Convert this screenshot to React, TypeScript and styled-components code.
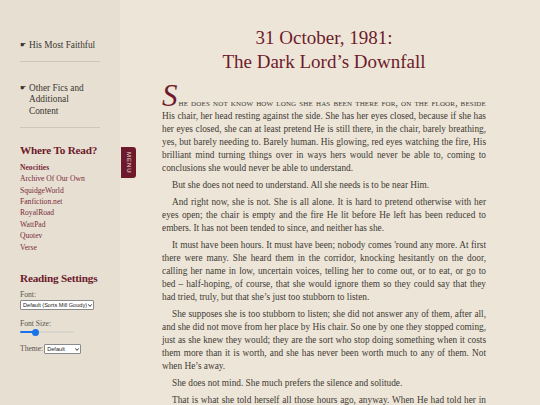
import React from "react";
import styled, {createGlobalStyle} from "styled-components";

const GlobalStyle = createGlobalStyle`
  html, body {
    margin: 0;
    padding: 0;
    background: #ede6d8;
  }
  body {
    font-family: "Liberation Serif", "Times New Roman", serif;
    color: #3f3a35;
  }
`

const Page = styled.div`
  display: flex;
  min-height: 100vh;
  position: relative;
`

const Sidebar = styled.aside`
  width: 120px;
  flex-shrink: 0;
  background: #e7e0d2;
  padding: 39px 10px 0 20px;
  box-sizing: border-box;
`

const Nav = styled.nav`
  display: flex;
  flex-direction: column;
  gap: 20px;
  margin-bottom: 15px;
`

const NavItem = styled.div`
  display: flex;
  gap: 3px;
  font-size: 9.3px;
  line-height: 11.2px;
  color: #3b3632;
  padding: 1px 0 10px;
  width: 80px;
  border-bottom: 1px solid #cfc6b6;
`

const Pointer = styled.span`
  font-size: 7px;
  flex-shrink: 0;
`

const SideTitle = styled.h3`
  margin: 0 0 5px;
  font-size: 11.2px;
  line-height: 14px;
  font-weight: bold;
  color: #6d1a2c;
  letter-spacing: -0.2px;
  white-space: nowrap;
`

const LinkList = styled.ul`
  list-style: none;
  margin: 0 0 18px;
  padding: 0;
`

const LinkItem = styled.li<{$current?: boolean}>`
  font-size: 7.6px;
  line-height: 11.4px;
  color: #7a2a3c;
  font-weight: ${({$current}) => $current ? "bold" : "normal"};
`

const SettingLabel = styled.div`
  font-size: 7.6px;
  line-height: 9px;
  color: #5a544e;
  margin-bottom: 1px;
`

const Setting = styled.div`
  margin-bottom: 9px;
  display: flex;
  flex-direction: column;
  align-items: flex-start;
`

const InlineSetting = styled.div`
  display: flex;
  align-items: center;
  gap: 1px;
`

const SelectWrap = styled.div<{$width: number}>`
  position: relative;
  width: ${({$width}) => $width}px;
  height: 10px;
`

const SmallSelect = styled.select`
  appearance: none;
  width: 100%;
  height: 100%;
  box-sizing: border-box;
  font-size: 5.6px;
  padding: 0 6px 0 2px;
  font-family: "Liberation Sans", Arial, sans-serif;
  border: 1px solid #8a8a8a;
  border-radius: 1px;
  background: #ffffff;
  color: #222;
  display: block;
`

const Chevron = styled.svg`
  position: absolute;
  right: 2px;
  top: 3.5px;
  width: 4px;
  height: 3px;
  pointer-events: none;
`

const Slider = styled.input`
  appearance: none;
  width: 54px;
  height: 6px;
  margin: 0;
  background: transparent;

  &::-webkit-slider-runnable-track {
    height: 2px;
    border-radius: 1px;
    background: linear-gradient(to right, #1a73e8 0 30%, #d9d4cc 30% 100%);
  }

  &::-webkit-slider-thumb {
    appearance: none;
    width: 7px;
    height: 7px;
    border-radius: 50%;
    background: #1a73e8;
    margin-top: -2.5px;
  }
`

const MenuTab = styled.div`
  position: absolute;
  left: 121px;
  top: 147px;
  width: 15px;
  height: 31px;
  background: #6d1a2c;
  border-radius: 0 3px 3px 0;
  display: flex;
  align-items: center;
  justify-content: center;
  color: #f1e6e0;
  font-family: "Liberation Sans", Arial, sans-serif;
  font-size: 6px;
  letter-spacing: 1px;
  writing-mode: vertical-rl;
`

const Main = styled.main`
  flex: 1;
  padding: 26px 54px 0 42px;
`

const Title = styled.h1`
  margin: 0 0 10px;
  text-align: center;
  font-size: 19px;
  line-height: 24px;
  font-weight: normal;
  color: #6d1a2c;
`

const Text = styled.p<{$first?: boolean}>`
  margin: 0 0 4px;
  font-size: 9.3px;
  line-height: 13px;
  text-align: justify;
  text-indent: ${({$first}) => $first ? "0" : "10px"};
`

const Initial = styled.span`
  font-size: 31px;
  line-height: 24px;
  color: #6d1a2c;
  font-style: italic;
  margin-right: 1px;
`

const SmallCaps = styled.span`
  font-variant: small-caps;
  letter-spacing: 0.15px;
`

const paragraphs = [
    "But she does not need to understand. All she needs is to be near Him.",
    "And right now, she is not. She is all alone. It is hard to pretend otherwise with her eyes open; the chair is empty and the fire He lit before He left has been reduced to embers. It has not been tended to since, and neither has she.",
    "It must have been hours. It must have been; nobody comes 'round any more. At first there were many. She heard them in the corridor, knocking hesitantly on the door, calling her name in low, uncertain voices, telling her to come out, or to eat, or go to bed \u2013 half-hoping, of course, that she would ignore them so they could say that they had tried, truly, but that she\u2019s just too stubborn to listen.",
    "She supposes she is too stubborn to listen; she did not answer any of them, after all, and she did not move from her place by His chair. So one by one they stopped coming, just as she knew they would; they are the sort who stop doing something when it costs them more than it is worth, and she has never been worth much to any of them. Not when He\u2019s away.",
    "She does not mind. She much prefers the silence and solitude.",
    "That is what she told herself all those hours ago, anyway. When He had told her in no uncertain terms that she was to stay behind, she had nodded and obeyed."
]

const readLinks = ["Archive Of Our Own", "SquidgeWorld", "Fanfiction.net", "RoyalRoad", "WattPad", "Quotev", "Verse"]

const Select = ({width, label}: {width: number, label: string}) =>
    <SelectWrap $width={width}>
        <SmallSelect defaultValue="default">
            <option value="default">{label}</option>
        </SmallSelect>
        <Chevron viewBox="0 0 4 3">
            <path d="M0.4 0.4 L2 2.4 L3.6 0.4" fill="none" stroke="#222" strokeWidth="0.9"/>
        </Chevron>
    </SelectWrap>

export default function App() {
    return <>
        <GlobalStyle/>
        <Page>
            <Sidebar>
                <Nav>
                    <NavItem><Pointer>☛</Pointer><span>His Most Faithful</span></NavItem>
                    <NavItem><Pointer>☛</Pointer><span>Other Fics and Additional Content</span></NavItem>
                </Nav>
                <SideTitle>Where To Read?</SideTitle>
                <LinkList>
                    <LinkItem $current>Neocities</LinkItem>
                    {readLinks.map((name) => <LinkItem key={name}>{name}</LinkItem>)}
                </LinkList>
                <SideTitle>Reading Settings</SideTitle>
                <Setting>
                    <SettingLabel>Font:</SettingLabel>
                    <Select width={74} label="Default (Sorts Mill Goudy)"/>
                </Setting>
                <Setting>
                    <SettingLabel>Font Size:</SettingLabel>
                    <Slider type="range" min={0} max={100} defaultValue={25}/>
                </Setting>
                <InlineSetting>
                    <SettingLabel>Theme:</SettingLabel>
                    <Select width={37} label="Default"/>
                </InlineSetting>
            </Sidebar>
            <MenuTab>MENU</MenuTab>
            <Main>
                <Title>31 October, 1981:<br/>The Dark Lord’s Downfall</Title>
                <Text $first>
                    <Initial>S</Initial>
                    <SmallCaps>he does not know how long she has been there for, on the floor, beside</SmallCaps> His
                    chair, her head resting against the side. She has her eyes closed, because if she has her eyes
                    closed, she can at least pretend He is still there, in the chair, barely breathing, yes, but
                    barely needing to. Barely human. His glowing, red eyes watching the fire, His brilliant mind
                    turning things over in ways hers would never be able to, coming to conclusions she would never
                    be able to understand.
                </Text>
                {paragraphs.map((text, index) => <Text key={index}>{text}</Text>)}
            </Main>
        </Page>
    </>
}
